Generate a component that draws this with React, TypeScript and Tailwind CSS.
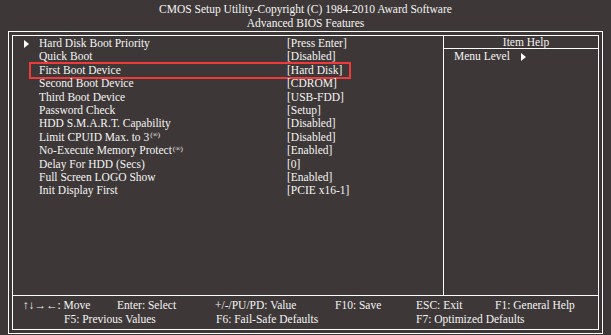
const items: { name: string; value: string; sup?: boolean; sub?: boolean; selected?: boolean }[] = [
  { name: "Hard Disk Boot Priority", value: "[Press Enter]", sub: true },
  { name: "Quick Boot", value: "[Disabled]" },
  { name: "First Boot Device", value: "[Hard Disk]", selected: true },
  { name: "Second Boot Device", value: "[CDROM]" },
  { name: "Third Boot Device", value: "[USB-FDD]" },
  { name: "Password Check", value: "[Setup]" },
  { name: "HDD S.M.A.R.T. Capability", value: "[Disabled]" },
  { name: "Limit CPUID Max. to 3", value: "[Disabled]", sup: true },
  { name: "No-Execute Memory Protect", value: "[Enabled]", sup: true },
  { name: "Delay For HDD (Secs)", value: "[0]" },
  { name: "Full Screen LOGO Show", value: "[Enabled]" },
  { name: "Init Display First", value: "[PCIE x16-1]" },
];

function Arrow() {
  return (
    <svg width="5" height="8" viewBox="0 0 5 8" className="block">
      <polygon points="0,0 5,4 0,8" fill="#ffffff" />
    </svg>
  );
}

export default function App() {
  return (
    <div
      className="w-[611px] h-[335px] bg-[#3d3837] text-[#f4f4f4] flex flex-col overflow-hidden text-[11.5px]"
      style={{ fontFamily: '"Liberation Serif", "DejaVu Serif", serif' }}
    >
      {/* title */}
      <div className="pt-[2px] text-center leading-[14px] h-[31px]">
        <div>CMOS Setup Utility-Copyright (C) 1984-2010 Award Software</div>
        <div>Advanced BIOS Features</div>
      </div>

      {/* double frame */}
      <div className="mx-[8px] h-[303px] border border-white p-[3px]">
        <div className="h-full border border-white flex flex-col">
          <div className="flex h-[260px] border-b border-white">
            {/* settings list */}
            <div className="w-[430px] pt-[1px] leading-[13.4px]">
              {items.map((it) => (
                <div key={it.name} className="relative flex items-center h-[13.4px] pl-[11px]">
                  <div className="w-[15px] flex items-center">{it.sub && <Arrow />}</div>
                  <div className="w-[248px] whitespace-nowrap">
                    {it.name}
                    {it.sup && <sup className="text-[7px] ml-[1px]">(®)</sup>}
                  </div>
                  <div className="whitespace-nowrap">{it.value}</div>
                  {it.selected && (
                    <div className="absolute left-[16px] top-[-2px] w-[322px] h-[17px] border-2 border-[#f03a3a]" />
                  )}
                </div>
              ))}
            </div>
            {/* item help */}
            <div className="flex-1 border-l border-white flex flex-col">
              <div className="h-[13px] border-b border-white text-center leading-[13px] pl-[10px]">
                Item Help
              </div>
              <div className="flex items-center gap-[11px] pl-[10px] pt-[1px] leading-[13px]">
                <span>Menu Level</span>
                <Arrow />
              </div>
            </div>
          </div>

          {/* key legend */}
          <div className="flex-1 pt-[2px] leading-[14px] whitespace-nowrap">
            <div className="flex pl-[10px]">
              <span className="w-[94px]">↑↓→←: Move</span>
              <span className="w-[98px]">Enter: Select</span>
              <span className="w-[120px]">+/-/PU/PD: Value</span>
              <span className="w-[81px]">F10: Save</span>
              <span className="w-[79px]">ESC: Exit</span>
              <span>F1: General Help</span>
            </div>
            <div className="flex pl-[51px]">
              <span className="w-[152px]">F5: Previous Values</span>
              <span className="w-[200px]">F6: Fail-Safe Defaults</span>
              <span>F7: Optimized Defaults</span>
            </div>
          </div>
        </div>
      </div>
    </div>
  );
}
